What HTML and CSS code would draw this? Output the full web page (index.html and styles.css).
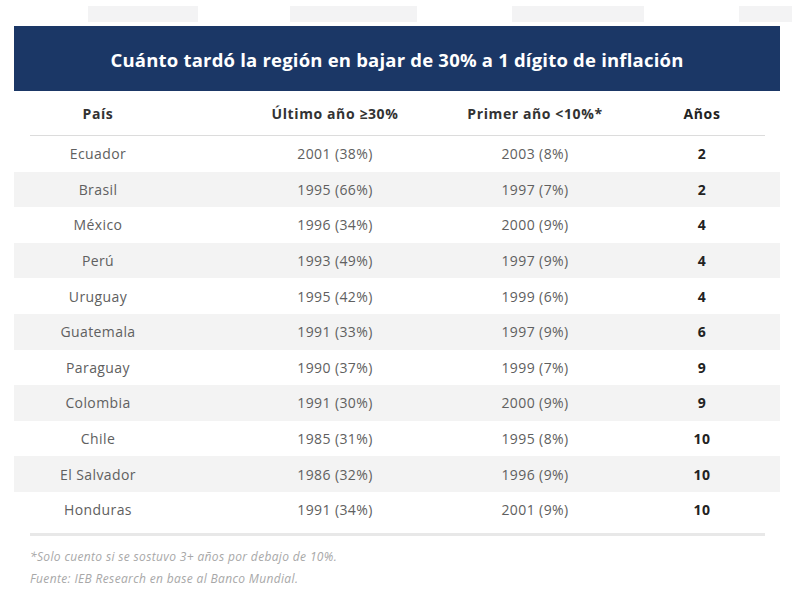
FILE: index.html
```html
<!DOCTYPE html>
<html lang="es">
<head>
<meta charset="utf-8">
<title>Inflación</title>
<link rel="stylesheet" href="styles.css">
</head>
<body>
<div class="ghosts">
  <span class="ghost g1"></span>
  <span class="ghost g2"></span>
  <span class="ghost g3"></span>
  <span class="ghost g4"></span>
</div>
<div class="card">
  <div class="title">Cuánto tardó la región en bajar de 30% a 1 dígito de inflación</div>
  <div class="row head">
    <div class="c1">País</div>
    <div class="c2">Último año ≥30%</div>
    <div class="c3">Primer año &lt;10%*</div>
    <div class="c4">Años</div>
  </div>
  <div class="rule"></div>
  <div class="row"><div class="c1">Ecuador</div><div class="c2">2001 (38%)</div><div class="c3">2003 (8%)</div><div class="c4">2</div></div>
  <div class="row alt"><div class="c1">Brasil</div><div class="c2">1995 (66%)</div><div class="c3">1997 (7%)</div><div class="c4">2</div></div>
  <div class="row"><div class="c1">México</div><div class="c2">1996 (34%)</div><div class="c3">2000 (9%)</div><div class="c4">4</div></div>
  <div class="row alt"><div class="c1">Perú</div><div class="c2">1993 (49%)</div><div class="c3">1997 (9%)</div><div class="c4">4</div></div>
  <div class="row"><div class="c1">Uruguay</div><div class="c2">1995 (42%)</div><div class="c3">1999 (6%)</div><div class="c4">4</div></div>
  <div class="row alt"><div class="c1">Guatemala</div><div class="c2">1991 (33%)</div><div class="c3">1997 (9%)</div><div class="c4">6</div></div>
  <div class="row"><div class="c1">Paraguay</div><div class="c2">1990 (37%)</div><div class="c3">1999 (7%)</div><div class="c4">9</div></div>
  <div class="row alt"><div class="c1">Colombia</div><div class="c2">1991 (30%)</div><div class="c3">2000 (9%)</div><div class="c4">9</div></div>
  <div class="row"><div class="c1">Chile</div><div class="c2">1985 (31%)</div><div class="c3">1995 (8%)</div><div class="c4">10</div></div>
  <div class="row alt"><div class="c1">El Salvador</div><div class="c2">1986 (32%)</div><div class="c3">1996 (9%)</div><div class="c4">10</div></div>
  <div class="row"><div class="c1">Honduras</div><div class="c2">1991 (34%)</div><div class="c3">2001 (9%)</div><div class="c4">10</div></div>
  <div class="rule thick"></div>
  <p class="note">*Solo cuento si se sostuvo 3+ años por debajo de 10%.</p>
  <p class="note">Fuente: IEB Research en base al Banco Mundial.</p>
</div>
</body>
</html>
```
FILE: styles.css
```css
html, body {
  margin: 0;
  padding: 0;
  background: #ffffff;
}
body {
  width: 800px;
  font-family: "Open Sans", "Liberation Sans", sans-serif;
  color: #555555;
}
.ghosts {
  height: 26px;
  display: flex;
  align-items: flex-start;
  padding-top: 6px;
  box-sizing: border-box;
}
.ghost {
  display: block;
  height: 16px;
  background: #f3f3f4;
}
.g1 { margin-left: 88px; width: 110px; }
.g2 { margin-left: 92px; width: 127px; }
.g3 { margin-left: 95px; width: 132px; }
.g4 { margin-left: 95px; width: 53px; }

.card {
  margin-left: 14px;
  width: 766px;
}
.title {
  height: 65px;
  background: #1b3766;
  color: #ffffff;
  font-weight: 700;
  font-size: 18.5px;
  letter-spacing: 0.2px;
  display: flex;
  align-items: center;
  justify-content: center;
  padding-top: 2px;
  box-sizing: border-box;
}
.row {
  display: grid;
  grid-template-columns: 221px 200px 200px 134px;
  height: 35.6px;
  align-items: center;
  font-size: 14px;
  letter-spacing: 0.4px;
  color: #606060;
}
.row > div {
  text-align: center;
  white-space: nowrap;
}
.row .c1 {
  padding-right: 53px;
}
.row .c4 {
  font-weight: 700;
  color: #222222;
}
.row.alt {
  background: #f3f3f3;
}
.row.head {
  height: 44px;
  font-weight: 700;
  color: #333333;
  font-size: 14px;
  letter-spacing: 0.6px;
}
.rule {
  height: 1px;
  background: #dcdcdc;
  margin: 0 15px 0 16px;
}
.rule.thick {
  height: 3px;
  background: #e8e8e8;
  margin-top: 5px;
}
.note {
  margin: 0 0 0 16px;
  font-size: 12px;
  letter-spacing: 0.35px;
  font-style: italic;
  color: #a8a8a8;
  line-height: 22px;
}
.rule.thick + .note {
  margin-top: 10px;
}
```
